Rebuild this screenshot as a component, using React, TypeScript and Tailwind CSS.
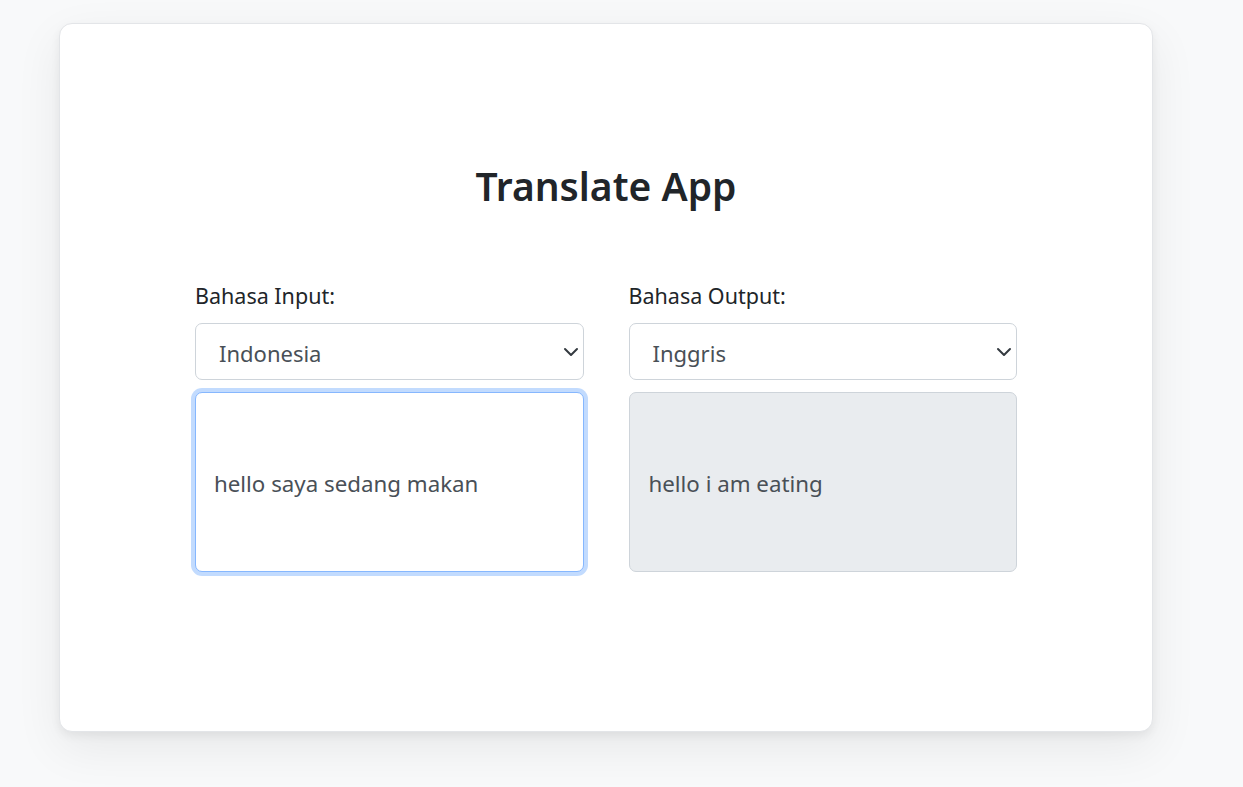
import React from "react";

function Chevron() {
  return (
    <svg width="16" height="16" viewBox="0 0 16 16" className="absolute right-[4px] top-1/2 -translate-y-1/2">
      <path d="M2 5l6 6 6-6" fill="none" stroke="#343a40" strokeWidth="2" strokeLinecap="round" strokeLinejoin="round" />
    </svg>
  );
}

function Select({ value }: { value: string }) {
  return (
    <div className="relative h-[57px] w-full rounded-[7px] border border-[#ced4da] bg-white flex items-center pl-[23px] pt-[3px] text-[22px] text-[#495057]">
      {value}
      <Chevron />
    </div>
  );
}

export default function App() {
  return (
    <div
      className="min-h-screen bg-[#f8f9fa] pt-[23px] pl-[59px]"
      style={{ fontFamily: '"Noto Sans", "Open Sans", sans-serif' }}
    >
      <div className="w-[1094px] h-[709px] bg-white border border-[#e3e5e8] rounded-[13px] shadow-[0_4px_10px_rgba(0,0,0,0.06),0_16px_48px_rgba(0,0,0,0.07)] flex flex-col items-center pt-[138px]">
        <h1 className="text-[39px] leading-[48px] font-semibold text-[#212529]">Translate App</h1>
        <div className="mt-[71px] grid grid-cols-2 gap-x-[45px] w-[822px]">
          <div className="flex flex-col">
            <label className="text-[21.5px] leading-[30px] text-[#212529]">Bahasa Input:</label>
            <div className="mt-[12px]">
              <Select value="Indonesia" />
            </div>
            <div className="mt-[12px] h-[180px] rounded-[7px] border border-[#86b7fe] shadow-[0_0_0_4px_rgba(13,110,253,0.25)] bg-white flex items-center pl-[18px] pt-[3px] text-[22.3px] text-[#495057]">
              hello saya sedang makan
            </div>
          </div>
          <div className="flex flex-col">
            <label className="text-[21.5px] leading-[30px] text-[#212529]">Bahasa Output:</label>
            <div className="mt-[12px]">
              <Select value="Inggris" />
            </div>
            <div className="mt-[12px] h-[180px] rounded-[7px] border border-[#ced4da] bg-[#e9ecef] flex items-center pl-[19px] pt-[3px] text-[22.3px] text-[#495057]">
              hello i am eating
            </div>
          </div>
        </div>
      </div>
    </div>
  );
}
